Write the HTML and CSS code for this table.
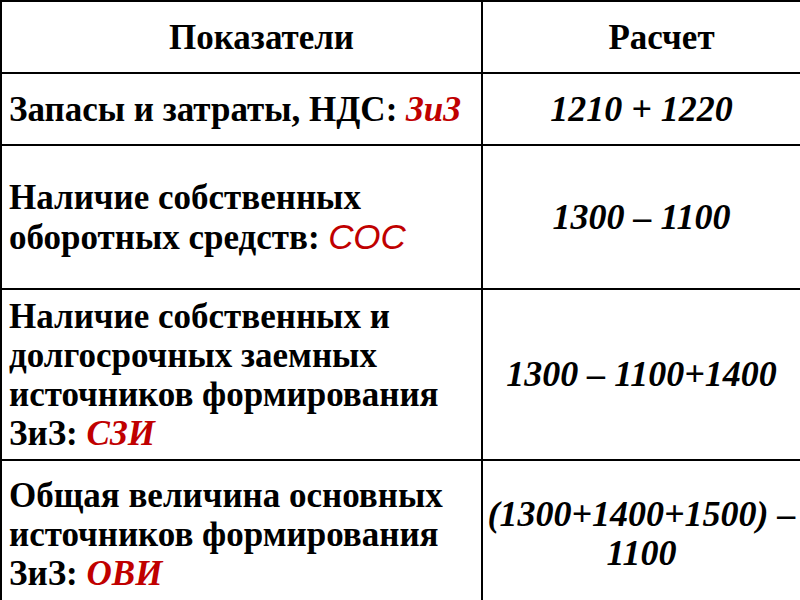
FILE: index.html
```html
<!DOCTYPE html>
<html lang="ru">
<head>
<meta charset="utf-8">
<link rel="stylesheet" href="styles.css">
</head>
<body>
<table class="grid">
  <colgroup>
    <col class="col-left">
    <col class="col-right">
  </colgroup>
  <tr class="row-head">
    <th class="cell-left head">Показатели</th>
    <th class="cell-right head">Расчет</th>
  </tr>
  <tr class="row-1">
    <td class="cell-left">Запасы и затраты, НДС: <span class="red">ЗиЗ</span></td>
    <td class="cell-right">1210 + 1220</td>
  </tr>
  <tr class="row-2">
    <td class="cell-left">Наличие собственных<br>оборотных средств: <span class="red sans">СОС</span></td>
    <td class="cell-right">1300 – 1100</td>
  </tr>
  <tr class="row-3">
    <td class="cell-left">Наличие собственных и<br>долгосрочных заемных<br>источников формирования<br>ЗиЗ: <span class="red">СЗИ</span></td>
    <td class="cell-right">1300 – 1100+1400</td>
  </tr>
  <tr class="row-4">
    <td class="cell-left">Общая величина основных<br>источников формирования<br>ЗиЗ: <span class="red">ОВИ</span></td>
    <td class="cell-right">(1300+1400+1500) –<br>1100</td>
  </tr>
</table>
</body>
</html>
```
FILE: styles.css
```css
html, body {
  margin: 0;
  padding: 0;
  background: #ffffff;
  overflow: hidden;
}
.grid {
  border-collapse: collapse;
  table-layout: fixed;
  width: 802px;
  font-family: "Liberation Serif", "Times New Roman", serif;
  color: #000;
}
.col-left { width: 481px; }
.grid td, .grid th {
  border: 2px solid #000;
  vertical-align: middle;
  padding: 0;
  font-weight: bold;
  font-size: 35px;
  line-height: 39px;
  white-space: nowrap;
}
.cell-left {
  text-align: left;
  padding-left: 7px !important;
}
.cell-right {
  text-align: center;
  font-style: italic;
  font-size: 36px !important;
}
.head {
  text-align: center !important;
  font-style: normal !important;
  font-size: 35px !important;
  padding-left: 40px !important;
}
.row-head { height: 72px; }
.row-1 { height: 72px; }
.row-2 { height: 144px; }
.row-3 { height: 171px; }
.row-4 { height: 148px; }
.red {
  color: #c00000;
  font-style: italic;
}
.sans {
  font-family: "Liberation Sans", Arial, sans-serif;
  font-weight: normal;
}
```
